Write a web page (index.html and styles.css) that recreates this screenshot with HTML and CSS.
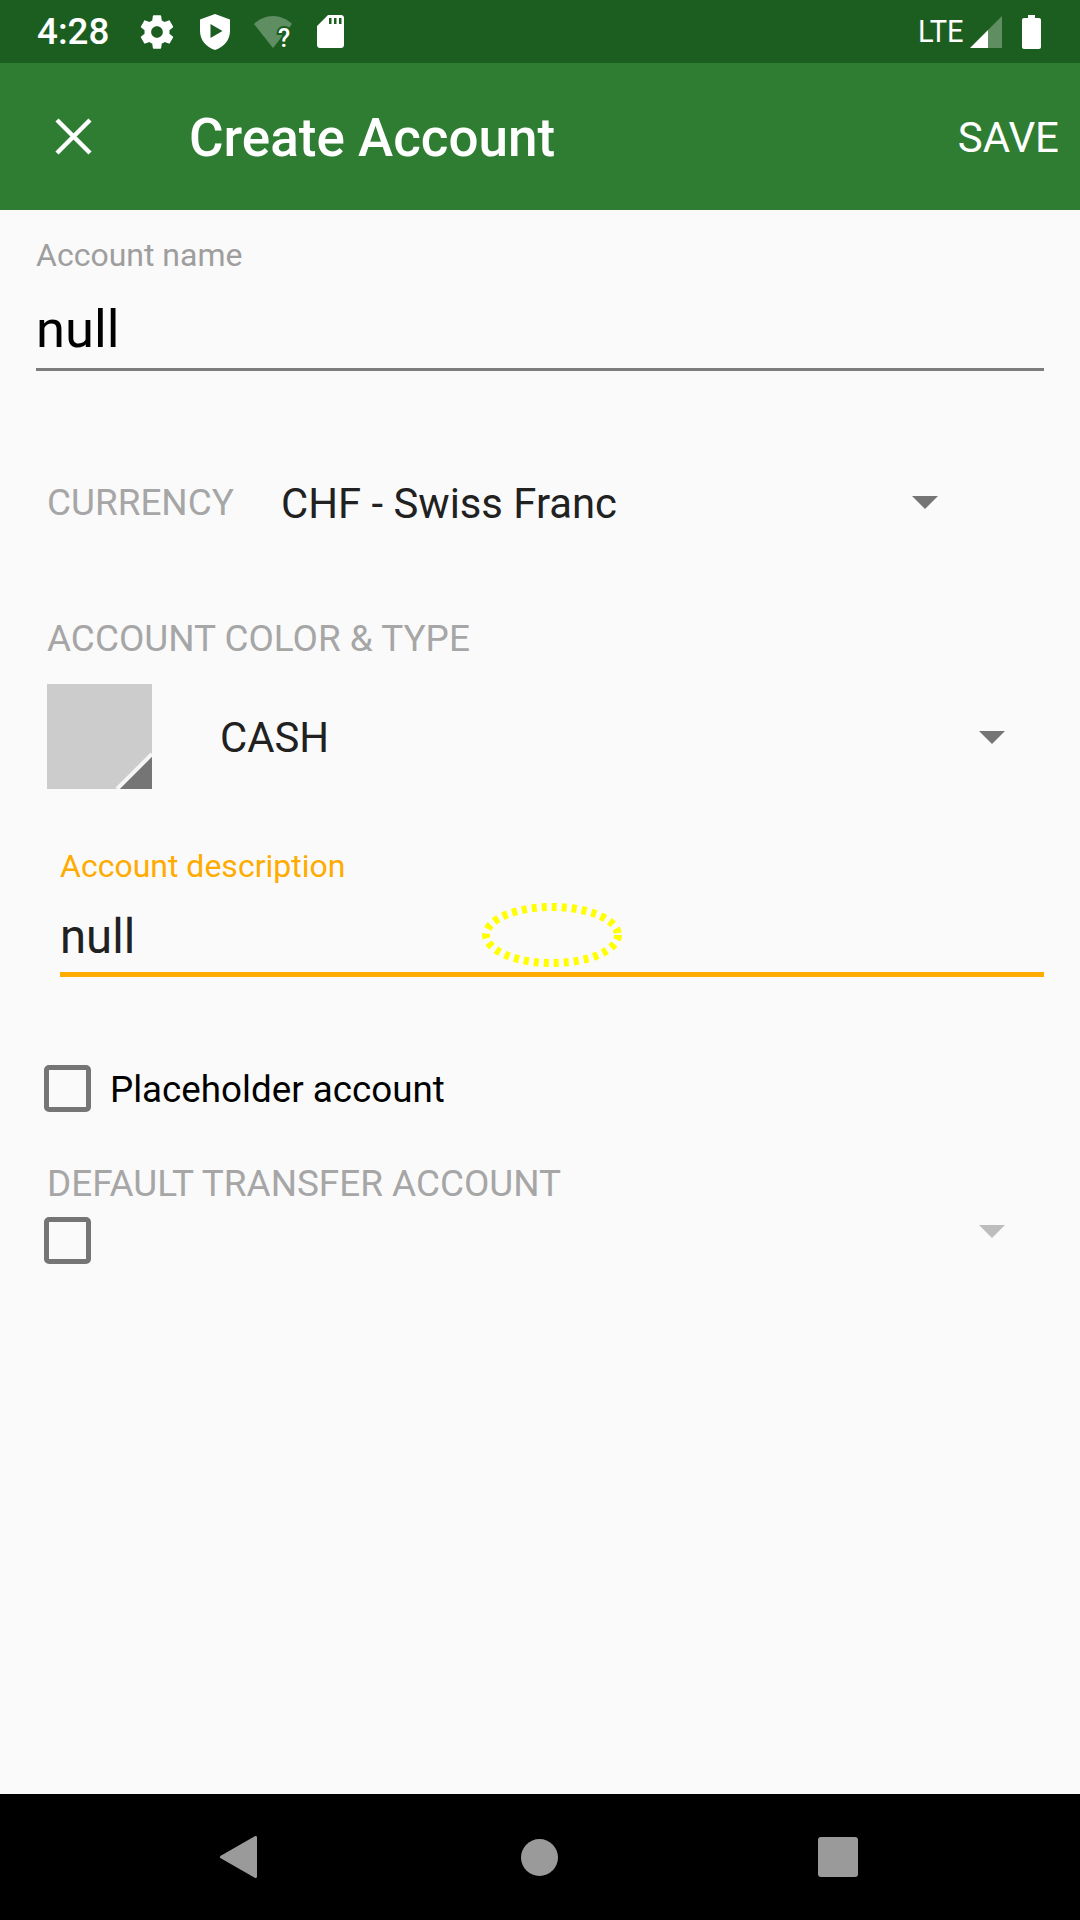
FILE: index.html
```html
<!DOCTYPE html>
<html lang="en">
<head>
  <meta charset="UTF-8">
  <meta name="viewport" content="width=device-width,initial-scale=1.0">
  <title>Create Account</title>
  <link rel="stylesheet" href="styles.css">
</head>
<body>
  <div class="screen">
    <div class="status-bar">
      <span class="time">4:28</span>
      <svg class="st-gear" viewBox="0 0 24 24"><path fill="#fff" d="M19.43 12.98c.04-.32.07-.64.07-.98s-.03-.66-.07-.98l2.11-1.65c.19-.15.24-.42.12-.64l-2-3.46c-.12-.22-.39-.3-.61-.22l-2.49 1c-.52-.4-1.08-.73-1.69-.98l-.38-2.65C14.46 2.18 14.25 2 14 2h-4c-.25 0-.46.18-.49.42l-.38 2.65c-.61.25-1.17.59-1.69.98l-2.49-1c-.23-.09-.49 0-.61.22l-2 3.46c-.13.22-.07.49.12.64l2.11 1.65c-.04.32-.07.65-.07.98s.03.66.07.98l-2.11 1.65c-.19.15-.24.42-.12.64l2 3.46c.12.22.39.3.61.22l2.49-1c.52.4 1.08.73 1.69.98l.38 2.65c.03.24.24.42.49.42h4c.25 0 .46-.18.49-.42l.38-2.65c.61-.25 1.17-.59 1.69-.98l2.49 1c.23.09.49 0 .61-.22l2-3.46c.12-.22.07-.49-.12-.64l-2.11-1.65zM12 15.5c-1.93 0-3.5-1.57-3.5-3.5s1.57-3.5 3.5-3.5 3.5 1.57 3.5 3.5-1.57 3.5-3.5 3.5z"/></svg>
      <svg class="st-shield" viewBox="0 0 30 36"><path fill="#fff" fill-rule="evenodd" d="M15 0L30 5.500V17C30 26 24 33 15 36C6 33 0 26 0 17V5.500ZM10.500 10V24L22.500 17Z"/></svg>
      <svg class="st-wifi" viewBox="0 -6 38 44"><path fill="#fff" fill-opacity="0.3" d="M0 8C5 3 12 0 19 0S33 3 38 8L19 32Z"/><text x="24" y="30.500" class="wifi-q">?</text></svg>
      <svg class="st-sd" viewBox="0 0 27 33"><path fill="#fff" fill-rule="evenodd" d="M11 0H24C25.700 0 27 1.300 27 3V30C27 31.700 25.700 33 24 33H3C1.300 33 0 31.700 0 30V11ZM12 3V9H14.500V3ZM17 3V9H19.500V3ZM22 3V9H24.500V3Z"/></svg>
      <span class="spacer"></span>
      <span class="lte">LTE</span>
      <svg class="st-signal" viewBox="0 0 32 32"><path fill="#fff" fill-opacity="0.3" d="M32 0V32H18V14Z"/><path fill="#fff" d="M18 14V32H0Z"/></svg>
      <svg class="st-battery" viewBox="0 0 19 34"><path fill="#fff" d="M6 0H13V3H17C18.100 3 19 3.900 19 5V32C19 33.100 18.100 34 17 34H2C.900 34 0 33.100 0 32V5C0 3.900 .900 3 2 3H6Z"/></svg>
    </div>

    <div class="toolbar">
      <svg class="close-icon" viewBox="0 0 37 37"><path stroke="#fff" stroke-width="4.500" d="M2 2L35 35M35 2L2 35"/></svg>
      <h1 class="title">Create Account</h1>
      <span class="save">SAVE</span>
    </div>

    <div class="content">
      <div class="field field-name">
        <label class="float-label">Account name</label>
        <div class="input-text big">null</div>
      </div>

      <div class="row row-currency">
        <span class="caps-label currency-label">CURRENCY</span>
        <span class="spinner-text">CHF - Swiss Franc</span>
        <span class="arrow arrow-currency"></span>
      </div>

      <div class="caps-label color-title">ACCOUNT COLOR &amp; TYPE</div>
      <div class="row row-type">
        <svg class="swatch" viewBox="0 0 105 105">
          <rect width="105" height="105" fill="#ccc"/>
          <path d="M105 72V105H72Z" fill="#757575"/>
          <path d="M105 70L70 105" stroke="#f5f5f5" stroke-width="4"/>
        </svg>
        <span class="spinner-text type-text">CASH</span>
        <span class="arrow arrow-type"></span>
      </div>

      <div class="field field-desc">
        <label class="float-label focused">Account description</label>
        <div class="input-text focused">null</div>
      </div>

      <div class="row row-check">
        <span class="checkbox"></span>
        <span class="check-text">Placeholder account</span>
      </div>

      <div class="caps-label transfer-title">DEFAULT TRANSFER ACCOUNT</div>
      <div class="row row-transfer">
        <span class="checkbox"></span>
        <span class="arrow arrow-light"></span>
      </div>

      <svg class="touch-mark" viewBox="0 0 144 68"><ellipse cx="72" cy="34" rx="66" ry="28" fill="none" stroke="#ffff00" stroke-width="8" stroke-dasharray="5 5"/></svg>
    </div>

    <div class="nav-bar">
      <svg class="nav-back" viewBox="0 0 37 42"><path fill="#9a9a9a" stroke="#9a9a9a" stroke-width="3" stroke-linejoin="round" d="M35.500 1.500V40.500L1.500 21Z"/></svg>
      <svg class="nav-home" viewBox="0 0 37 37"><circle cx="18.500" cy="18.500" r="18.500" fill="#9a9a9a"/></svg>
      <span class="nav-recent"></span>
    </div>
  </div>
</body>
</html>
```
FILE: styles.css
```css
* {
  box-sizing: border-box;
}
body {
  margin: 0;
  font-family: Roboto, sans-serif;
  background: #fafafa;
}
.screen {
  width: 1080px;
  height: 1920px;
  display: flex;
  flex-direction: column;
  overflow: hidden;
}
.status-bar {
  height: 63px;
  background: #1b5e20;
  display: flex;
  align-items: center;
  padding: 0 39px 0 37px;
  color: #fff;
}
.time {
  font-size: 36.75px;
  font-weight: 500;
  width: 103px;
}
.status-bar svg {
  flex: none;
}
.st-gear {
  width: 40px;
  height: 40px;
  margin-right: 23px;
  margin-left: -3px;
}
.st-shield {
  width: 30px;
  height: 36px;
  margin-right: 24px;
}
.st-wifi {
  width: 38px;
  height: 44px;
  margin-right: 25px;
}
.wifi-q {
  font-family: Roboto, sans-serif;
  font-size: 25px;
  font-weight: 500;
  fill: #fff;
  stroke: #1b5e20;
  stroke-width: 4px;
  paint-order: stroke;
}
.st-sd {
  width: 27px;
  height: 33px;
}
.spacer {
  flex: 1;
}
.lte {
  font-size: 31.5px;
  margin-right: 5px;
  transform: scaleX(0.92);
}
.st-signal {
  width: 32px;
  height: 32px;
  margin-right: 20px;
}
.st-battery {
  width: 19px;
  height: 34px;
}
.toolbar {
  height: 147px;
  background: #2e7d32;
  display: flex;
  align-items: center;
  padding: 2px 21px 0 55px;
  color: #fff;
}
.close-icon {
  width: 37px;
  height: 37px;
  margin-top: -2px;
  margin-right: 97px;
}
.title {
  flex: 1;
  margin: 0;
  font-size: 53px;
  font-weight: 500;
}
.save {
  font-size: 42px;
}
.content {
  position: relative;
  flex: 1;
  background: #fafafa;
}
.float-label {
  display: block;
  font-size: 32px;
  line-height: 37px;
  color: #9e9e9e;
}
.float-label.focused {
  color: #ffab00;
}
.field-name {
  margin: 27px 36px 0;
}
.input-text {
  font-size: 47.25px;
  color: #212121;
}
.input-text.big {
  font-size: 52.5px;
  line-height: 70px;
  height: 95px;
  margin-top: 2px;
  padding-top: 18px;
  color: #000;
  border-bottom: 3px solid #7c7c7c;
}
.input-text.focused {
  border-bottom: 5px solid #ffab00;
  height: 88px;
  line-height: 62px;
  margin-top: 4px;
  padding-top: 17px;
}
.row {
  display: flex;
  align-items: center;
}
.caps-label {
  font-size: 36.9px;
  color: #a6a6a6;
  line-height: 44px;
}
.row-currency {
  margin-top: 110px;
  padding-left: 47px;
  height: 44px;
  position: relative;
}
.currency-label {
  width: 234px;
}
.spinner-text {
  font-size: 41.8px;
  color: #212121;
}
.type-text {
  margin-top: 2px;
}
.arrow {
  position: absolute;
  width: 26px;
  height: 13px;
  background: #757575;
  clip-path: polygon(0 0, 100% 0, 50% 100%);
}
.arrow-currency {
  left: 912px;
  top: 15px;
}
.color-title {
  margin: 92px 0 0 47px;
}
.row-type {
  position: relative;
  margin-top: 23px;
  padding-left: 47px;
  height: 105px;
}
.swatch {
  width: 105px;
  height: 105px;
  margin-right: 68px;
}
.arrow-type {
  left: 979px;
  top: 47px;
}
.field-desc {
  margin: 59px 36px 0 60px;
}
.row-check {
  margin-top: 88px;
  padding-left: 44px;
}
.checkbox {
  display: block;
  width: 47px;
  height: 47px;
  border: 5px solid #757575;
  border-radius: 5px;
  flex: none;
}
.check-text {
  font-size: 36.75px;
  color: #000;
  margin: 2px 0 0 19px;
}
.transfer-title {
  margin: 50px 0 0 47px;
}
.row-transfer {
  position: relative;
  margin-top: 11px;
  padding-left: 44px;
}
.arrow-light {
  left: 979px;
  top: 8px;
  background: #bdbdbd;
}
.touch-mark {
  position: absolute;
  left: 480px;
  top: 691px;
  width: 144px;
  height: 68px;
}
.nav-bar {
  height: 126px;
  background: #000;
  display: flex;
  align-items: center;
  padding-left: 220px;
}
.nav-back {
  width: 37px;
  height: 42px;
  margin-right: 264px;
}
.nav-home {
  width: 37px;
  height: 37px;
  margin-right: 260px;
}
.nav-recent {
  width: 40px;
  height: 40px;
  background: #9a9a9a;
  border-radius: 3px;
}
```
